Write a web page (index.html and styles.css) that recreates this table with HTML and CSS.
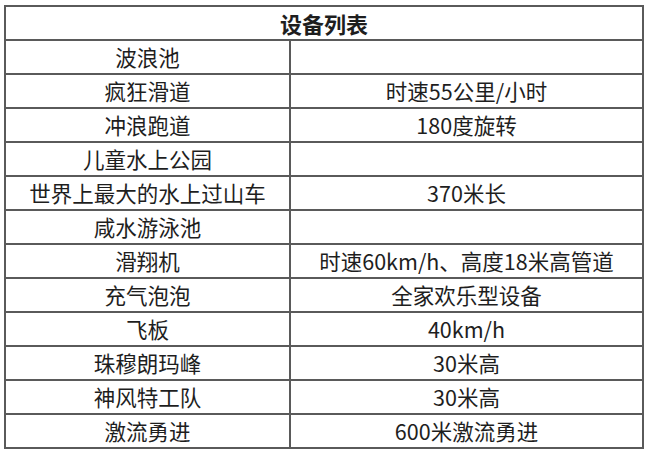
FILE: index.html
```html
<!DOCTYPE html>
<html lang="zh">
<head>
<meta charset="utf-8">
<title>设备列表</title>
<link rel="stylesheet" href="styles.css">
</head>
<body>
<table class="equip">
  <colgroup>
    <col class="col-name">
    <col class="col-info">
  </colgroup>
  <thead>
    <tr><th colspan="2">设备列表</th></tr>
  </thead>
  <tbody>
    <tr><td>波浪池</td><td></td></tr>
    <tr><td>疯狂滑道</td><td>时速55公里/小时</td></tr>
    <tr><td>冲浪跑道</td><td>180度旋转</td></tr>
    <tr><td>儿童水上公园</td><td></td></tr>
    <tr><td>世界上最大的水上过山车</td><td>370米长</td></tr>
    <tr><td>咸水游泳池</td><td></td></tr>
    <tr><td>滑翔机</td><td>时速60km/h、高度18米高管道</td></tr>
    <tr><td>充气泡泡</td><td>全家欢乐型设备</td></tr>
    <tr><td>飞板</td><td>40km/h</td></tr>
    <tr><td>珠穆朗玛峰</td><td>30米高</td></tr>
    <tr><td>神风特工队</td><td>30米高</td></tr>
    <tr><td>激流勇进</td><td>600米激流勇进</td></tr>
  </tbody>
</table>
</body>
</html>
```
FILE: styles.css
```css
html, body {
  margin: 0;
  padding: 0;
  background: #ffffff;
}
body {
  padding: 5px 4px 0 4px;
  font-family: "Noto Sans CJK SC", "Noto Sans", "Liberation Sans", sans-serif;
  color: #1e1e1e;
}
.equip {
  border-collapse: collapse;
  width: 640px;
  table-layout: fixed;
}
.col-name {
  width: 285px;
}
.equip th,
.equip td {
  border: 2px solid #5a5a5a;
  height: 32px;
  padding: 0;
  text-align: center;
  vertical-align: middle;
  font-size: 21.5px;
  line-height: 30px;
  white-space: nowrap;
}
.equip th {
  font-weight: bold;
  font-size: 22px;
}
```
